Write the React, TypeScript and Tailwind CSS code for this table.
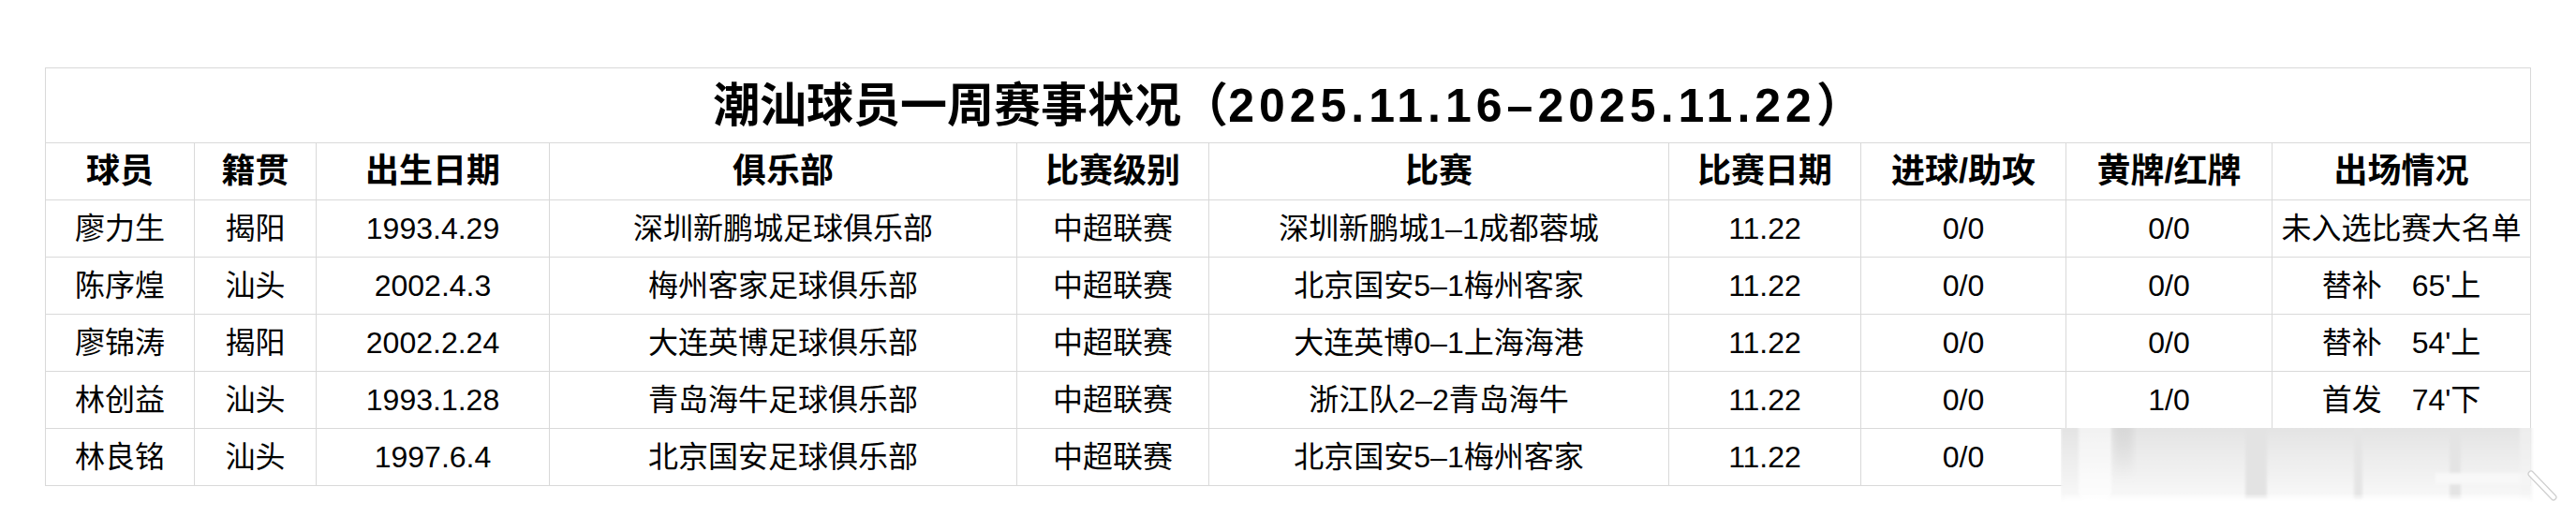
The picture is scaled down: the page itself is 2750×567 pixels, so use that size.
import React from "react";

const cols = [
  "w-[159px]",
  "w-[130px]",
  "w-[249px]",
  "w-[499px]",
  "w-[205px]",
  "w-[491px]",
  "w-[205px]",
  "w-[219px]",
  "w-[220px]",
  "w-[276px]",
];

const headers = ["球员", "籍贯", "出生日期", "俱乐部", "比赛级别", "比赛", "比赛日期", "进球/助攻", "黄牌/红牌", "出场情况"];

const rows = [
  ["廖力生", "揭阳", "1993.4.29", "深圳新鹏城足球俱乐部", "中超联赛", "深圳新鹏城1–1成都蓉城", "11.22", "0/0", "0/0", "未入选比赛大名单"],
  ["陈序煌", "汕头", "2002.4.3", "梅州客家足球俱乐部", "中超联赛", "北京国安5–1梅州客家", "11.22", "0/0", "0/0", "替补　65'上"],
  ["廖锦涛", "揭阳", "2002.2.24", "大连英博足球俱乐部", "中超联赛", "大连英博0–1上海海港", "11.22", "0/0", "0/0", "替补　54'上"],
  ["林创益", "汕头", "1993.1.28", "青岛海牛足球俱乐部", "中超联赛", "浙江队2–2青岛海牛", "11.22", "0/0", "1/0", "首发　74'下"],
  ["林良铭", "汕头", "1997.6.4", "北京国安足球俱乐部", "中超联赛", "北京国安5–1梅州客家", "11.22", "0/0", "", ""],
];

// blurred ghost image lying over the last row's right-hand cells
const Ghost = () => (
  <svg className="absolute left-[2200px] top-[457px] pointer-events-none" width="530" height="82" viewBox="0 0 530 82">
    <defs>
      <filter id="soft" x="-5%" y="-20%" width="110%" height="140%">
        <feGaussianBlur stdDeviation="1.6" />
      </filter>
      <filter id="softer" x="-20%" y="-20%" width="140%" height="140%">
        <feGaussianBlur stdDeviation="3.5" />
      </filter>
      <linearGradient id="base" x1="0" y1="0" x2="0" y2="1">
        <stop offset="0" stopColor="#e0e0e0" />
        <stop offset="0.5" stopColor="#ededed" />
        <stop offset="1" stopColor="#f9f9f9" />
      </linearGradient>
      <linearGradient id="pillar" x1="0" y1="0" x2="0" y2="1">
        <stop offset="0" stopColor="#f1f1f1" />
        <stop offset="1" stopColor="#fefefe" />
      </linearGradient>
      <linearGradient id="shade" x1="0" y1="0" x2="0" y2="1">
        <stop offset="0" stopColor="#d6d6d6" />
        <stop offset="1" stopColor="#d6d6d6" stopOpacity="0" />
      </linearGradient>
    </defs>
    <g filter="url(#soft)">
      <rect x="0" y="-10" width="503" height="88" fill="url(#base)" />
      <path d="M19 -6 H54 V64 Q54 79 40 79 H33 Q19 79 19 64 Z" fill="url(#pillar)" />
      <rect x="197" y="-6" width="23" height="82" fill="#e3e3e3" />
      <rect x="313" y="-6" width="9" height="83" fill="#e5e5e5" />
      <rect x="415" y="-6" width="12" height="83" fill="#e4e4e4" />
      <rect x="400" y="48" width="103" height="12" fill="#f8f8f8" />
      <rect x="490" y="-10" width="13" height="88" fill="#f4f4f4" opacity="0.6" />
    </g>
    <rect x="57" y="-6" width="20" height="60" fill="url(#shade)" filter="url(#softer)" />
    <rect x="0" y="74" width="503" height="14" fill="#ffffff" filter="url(#softer)" />
    <line x1="502" y1="49" x2="526" y2="74" stroke="#cfcfcf" strokeWidth="7" strokeLinecap="round" />
    <line x1="502" y1="49" x2="526" y2="74" stroke="#ffffff" strokeWidth="4.5" strokeLinecap="round" />
  </svg>
);

export default function App() {
  return (
    <div className="w-[2750px] h-[567px] bg-white text-black font-['Liberation_Sans','Noto_Sans_CJK_SC',sans-serif]">
      <div className="relative pl-[48px] pt-[72px]">
        <table className="table-fixed border-collapse border border-[#d9d9d9] w-[2654px]">
          <colgroup>
            {cols.map((c, i) => (
              <col key={i} className={c} />
            ))}
          </colgroup>
          <tbody>
            <tr className="h-[80px]">
              <td colSpan={10} className="border border-[#d9d9d9] text-center text-[50px] font-bold leading-none">
                潮汕球员一周赛事状况（<span className="tracking-[5px]">2025.11.16–2025.11.22</span>）
              </td>
            </tr>
            <tr className="h-[61px]">
              {headers.map((h) => (
                <td key={h} className="border border-[#d9d9d9] text-center text-[36px] font-bold leading-none">
                  {h}
                </td>
              ))}
            </tr>
            {rows.map((r, i) => (
              <tr key={i} className="h-[61px]">
                {r.map((c, j) => (
                  <td
                    key={j}
                    className="border border-[#d9d9d9] text-center text-[32px] leading-none whitespace-nowrap"
                  >
                    {c}
                  </td>
                ))}
              </tr>
            ))}
          </tbody>
        </table>
        <Ghost />
      </div>
    </div>
  );
}
